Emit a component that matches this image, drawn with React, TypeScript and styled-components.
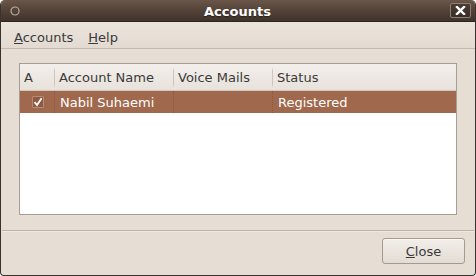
import styled, { createGlobalStyle } from 'styled-components';

const GlobalStyle = createGlobalStyle`
    html, body {
        margin: 0;
        padding: 0;
        background: #ffffff;
    }
    body {
        font-family: "DejaVu Sans", "Liberation Sans", sans-serif;
        font-size: 13px;
    }
`;

const COLUMNS = [
    { key: 'a', label: 'A', width: 35 },
    { key: 'name', label: 'Account Name', width: 119 },
    { key: 'voice', label: 'Voice Mails', width: 99 },
    { key: 'status', label: 'Status', width: 0 },
];

const ACCOUNTS = [{ enabled: true, name: 'Nabil Suhaemi', voiceMails: '', status: 'Registered', selected: true }];

const App = () => {
    return (
        <>
            <GlobalStyle />
            <Window>
                <TitleBar>
                    <WindowMenu>
                        <svg width="10" height="10" viewBox="0 0 10 10">
                            <circle cx="5" cy="5" r="4" fill="none" stroke="#b9aca2" strokeWidth="1.2" />
                        </svg>
                    </WindowMenu>
                    <Title>Accounts</Title>
                    <CloseBox>
                        <svg width="11" height="9" viewBox="0 0 11 9">
                            <path d="M2 1 L9 8 M9 1 L2 8" stroke="#ffffff" strokeWidth="2.4" strokeLinecap="square" />
                        </svg>
                    </CloseBox>
                </TitleBar>
                <MenuBar>
                    <MenuItem>
                        <u>A</u>ccounts
                    </MenuItem>
                    <MenuItem>
                        <u>H</u>elp
                    </MenuItem>
                </MenuBar>
                <Content>
                    <TreeFrame>
                        <HeaderRow>
                            {COLUMNS.map(({ key, label, width }) => (
                                <HeaderCell key={key} $width={width}>
                                    {label}
                                </HeaderCell>
                            ))}
                        </HeaderRow>
                        {ACCOUNTS.map((acc) => (
                            <Row key={acc.name} $selected={acc.selected}>
                                <Cell $width={35} $dotted>
                                    <CheckBox>
                                        {acc.enabled && (
                                            <svg width="10" height="10" viewBox="0 0 10 10">
                                                <path d="M1.5 5.2 L4 8 L8.6 1.2" fill="none" stroke="#ffffff" strokeWidth="1.8" />
                                            </svg>
                                        )}
                                    </CheckBox>
                                </Cell>
                                <Cell $width={119} $dotted>{acc.name}</Cell>
                                <Cell $width={99} $dotted>{acc.voiceMails}</Cell>
                                <Cell $width={0}>{acc.status}</Cell>
                            </Row>
                        ))}
                    </TreeFrame>
                </Content>
                <Separator />
                <ButtonBar>
                    <Button>
                        <u>C</u>lose
                    </Button>
                </ButtonBar>
            </Window>
        </>
    );
};

export default App;

const Window = styled.div`
    width: 476px;
    height: 276px;
    box-sizing: border-box;
    display: flex;
    flex-direction: column;
    background: #e6ddd4;
    border: 1px solid #3b322d;
    border-top: none;
    border-radius: 5px 5px 4px 4px;
    overflow: hidden;
`;

const TitleBar = styled.div`
    height: 22px;
    flex: none;
    display: flex;
    align-items: center;
    padding: 0 4px 0 9px;
    background: linear-gradient(to bottom, #6b5649 0%, #55443a 45%, #3f332c 100%);
    border-bottom: 1px solid #2e2521;
    box-sizing: border-box;
    margin: 0 -1px;
`;

const WindowMenu = styled.div`
    display: flex;
    width: 12px;
    height: 12px;
    align-items: center;
    justify-content: center;
`;

const Title = styled.div`
    flex: 1;
    text-align: center;
    color: #ffffff;
    font-weight: bold;
    font-size: 13px;
    text-shadow: 0 1px 1px #2a201b;
    padding-left: 4px;
    padding-top: 1px;
`;

const CloseBox = styled.div`
    width: 21px;
    height: 15px;
    box-sizing: border-box;
    display: flex;
    align-items: center;
    justify-content: center;
    border: 1px solid #8e7d72;
    border-radius: 2px;
    background: linear-gradient(to bottom, #4a3c34, #3a2f29);
    margin-right: 1px;
`;

const MenuBar = styled.div`
    height: 27px;
    flex: none;
    display: flex;
    align-items: center;
    padding: 4px 0 0 7px;
    box-sizing: border-box;
    border-bottom: 1px solid #c3b9af;
    background: linear-gradient(to bottom, #ebe4dc, #e3dbd2);
`;

const MenuItem = styled.div`
    padding: 0 7px 0 6px;
    margin-right: 2px;
    color: #3a3a3a;
    font-size: 13px;
`;

const Content = styled.div`
    flex: 1;
    display: flex;
    padding: 14px 18px 15px;
    min-height: 0;
`;

const TreeFrame = styled.div`
    flex: 1;
    background: #ffffff;
    border: 1px solid #a79d93;
    display: flex;
    flex-direction: column;
`;

const HeaderRow = styled.div`
    height: 26px;
    flex: none;
    display: flex;
    background: linear-gradient(to bottom, #f3efeb, #e8e2dc);
    border-bottom: 1px solid #cfc6bd;
`;

const HeaderCell = styled.div<{ $width: number }>`
    display: flex;
    align-items: center;
    box-sizing: border-box;
    padding-left: 4px;
    padding-top: 1px;
    color: #3a3a3a;
    font-size: 13px;
    white-space: nowrap;
    ${({ $width }) => ($width ? `width: ${$width}px;` : 'flex: 1;')}
    ${({ $width }) =>
        $width
            ? `border-right: 1px solid transparent;
               border-image: linear-gradient(to bottom, transparent 15%, #cdc4bb 30%, #cdc4bb 75%, transparent 90%) 1;`
            : ''}
`;

const Row = styled.div<{ $selected?: boolean }>`
    height: 22px;
    display: flex;
    background: ${({ $selected }) => ($selected ? '#a0684d' : 'transparent')};
    color: ${({ $selected }) => ($selected ? '#ffffff' : '#3a3a3a')};
`;

const Cell = styled.div<{ $width: number; $dotted?: boolean }>`
    display: flex;
    align-items: center;
    box-sizing: border-box;
    padding-left: 5px;
    font-size: 13px;
    white-space: nowrap;
    ${({ $width }) => ($width ? `width: ${$width}px;` : 'flex: 1;')}
    border-right: ${({ $dotted }) => ($dotted ? '1px dotted #8c5940' : 'none')};
`;

const CheckBox = styled.div`
    width: 12px;
    height: 12px;
    margin-left: 7px;
    box-sizing: border-box;
    display: flex;
    align-items: center;
    justify-content: center;
    background: #8d5b44;
    border: 1px solid #b88a75;
    border-radius: 1px;
`;

const Separator = styled.div`
    height: 0;
    flex: none;
    border-top: 1px solid #bdb3a9;
    border-bottom: 1px solid #f0eae4;
    margin: 0 1px;
`;

const ButtonBar = styled.div`
    flex: none;
    display: flex;
    justify-content: flex-end;
    padding: 6px 10px 11px;
`;

const Button = styled.button`
    width: 83px;
    height: 26px;
    font-family: "DejaVu Sans", "Liberation Sans", sans-serif;
    font-size: 13px;
    color: #3a3a3a;
    border: 1px solid #a49a90;
    border-radius: 3px;
    background: linear-gradient(to bottom, #f2eee9, #e3dcd4);
    padding: 0;
    box-shadow: inset 0 1px 0 #faf8f5;
`;
